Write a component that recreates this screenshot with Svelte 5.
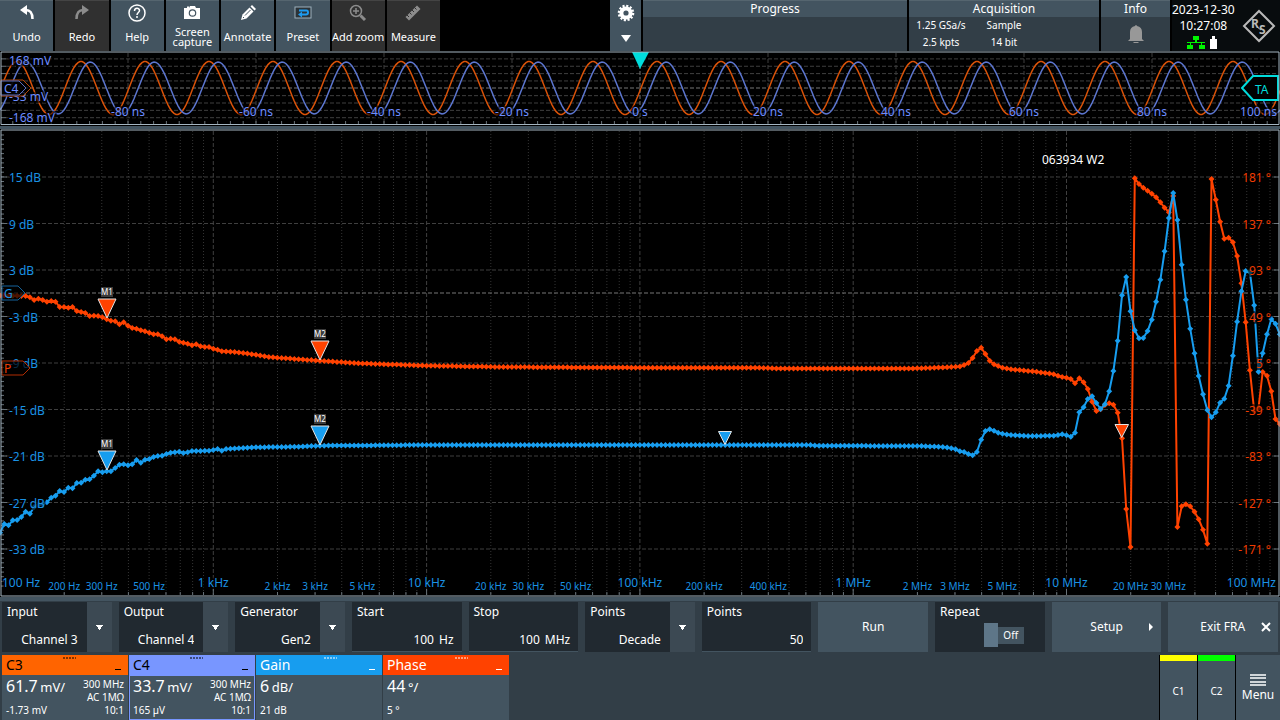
<script>
	const tools = [
		{ icon: 'undo', label: 'Undo' },
		{ icon: 'redo', label: 'Redo', off: true },
		{ icon: 'help', label: 'Help' },
		{ icon: 'camera', label: 'Screen capture' },
		{ icon: 'pencil', label: 'Annotate' },
		{ icon: 'preset', label: 'Preset' },
		{ icon: 'zoom', label: 'Add zoom', off: true },
		{ icon: 'ruler', label: 'Measure', off: true }
	];

	const channels = [
		{ name: 'C3', kind: 'c3', scale: '61.7', unit: 'mV/', offset: '-1.73 mV', bandwidth: '300 MHz', coupling: 'AC 1MΩ', probe: '10:1' },
		{ name: 'C4', kind: 'c4', scale: '33.7', unit: 'mV/', offset: '165 µV', bandwidth: '300 MHz', coupling: 'AC 1MΩ', probe: '10:1' },
		{ name: 'Gain', kind: 'gain', scale: '6', unit: 'dB/', offset: '21 dB' },
		{ name: 'Phase', kind: 'phase', scale: '44', unit: '°/', offset: '5 °' }
	];

	// time domain preview
	function sine(peak, amp) {
		let pts = [];
		for (let x = 0; x <= 1280; x += 2) {
			pts.push(x + ',' + (88 - amp * Math.cos(((x - peak) / 64) * 2 * Math.PI)).toFixed(1));
		}
		return pts.join(' ');
	}
	const times = [-80, -60, -40, -20, 0, 20, 40, 60, 80];
	const timeTicks = Array.from({ length: 99 }, (_, i) => (i + 1) * 12.8);
	const previewLines = [-4, -3, -2, -1, 1, 2, 3, 4].map((n) => 88.3 + n * 7.35);

	// bode plot, 50 points per decade over 6 decades
	const decade = 213.3;
	const step = decade / 50;
	const minor = [];
	for (let d = 0; d < 6; d++) {
		for (let m = 2; m < 10; m++) minor.push((d + Math.log10(m)) * decade);
	}
	const rows = Array.from({ length: 9 }, (_, i) => ({
		y: 177 + i * 46.5,
		db: 15 - i * 6 + ' dB',
		deg: 181 - i * 44 + ' °'
	}));
	const sideTicks = Array.from({ length: 98 }, (_, i) => 135 + i * 4.65);

	const freqs = [
		['1 kHz', 1], ['10 kHz', 2], ['100 kHz', 3], ['1 MHz', 4], ['10 MHz', 5]
	];
	const smallFreqs = [
		['200 Hz', 0.301], ['300 Hz', 0.477], ['500 Hz', 0.699],
		['2 kHz', 1.301], ['3 kHz', 1.477], ['5 kHz', 1.699],
		['20 kHz', 2.301], ['30 kHz', 2.477], ['50 kHz', 2.699],
		['200 kHz', 3.301], ['400 kHz', 3.602],
		['2 MHz', 4.301], ['3 MHz', 4.477], ['5 MHz', 4.699],
		['20 MHz', 5.301], ['30 MHz', 5.477]
	];

	// [first index, values...] for runs of measured points, gaps are interpolated
	const phaseRuns = [
		[0, 295.5], [6, 296, 297.3, 300, 298.7, 300, 301.7, 301, 301.7, 307, 307, 307.7, 307, 311, 312, 313, 316, 315.7, 316, 317.3, 319.3,
			320.7, 321.3, 324.3, 322.3, 325.7, 328, 328.7, 330.3, 331.3, 332.7, 334.3, 334.3, 336.3, 339.3, 338.7, 339.3, 341.7, 342.7,
			343.7, 345.3, 344.3, 346.3, 347, 347, 348.7, 349.7, 351.3],
		[55, 352], [60, 354.7], [63, 357], [70, 359.3], [75, 360.7], [84, 363.3], [100, 365.7], [118, 367], [150, 367.7], [178, 367.7],
		[182, 368.5], [213, 368.5], [218, 368], [223, 367], [225, 366.5, 365, 363, 358, 351, 347.7, 354, 360.7, 364.3, 366, 367.7],
		[237, 369.3], [243, 371.7], [247, 374.3, 375.7, 377, 377.7, 379, 383.3, 378.3, 382.3, 389, 401.7, 411, 409.3, 405, 403.3, 404.7,
			412.7, 438.3, 509, 547, 178.3, 184, 187.7, 190.7, 193.7, 197.3, 202.3, 207.7, 212.3, 196, 527, 506.3, 504.3, 506.3, 511.7,
			519.3, 529.7, 543.7, 179, 199.7, 221.7, 238.7, 237.7, 242.3, 256, 283.3, 322.3, 370.3, 411, 408, 372, 375.7, 391.3, 419, 424]
	];
	const gainRuns = [
		[0, 532.7, 524, 525.3, 520.3, 520, 517, 511.7, 513.7, 507, 505, 504, 502.3, 497.7, 495.7, 491, 492, 487.7, 488.3, 483, 482.7,
			479.7, 479.3, 475.7, 471.3, 472.3, 471.3, 471.3, 468, 464.7, 464.3, 465.3, 464.3, 460, 462.7, 459.7, 459, 457, 456, 455.7,
			454, 452.7, 452.3, 451.7, 453, 452.3, 451],
		[49, 450.7], [51, 449, 450.7, 449], [60, 447.3], [70, 446.7], [75, 445.7], [100, 445], [190, 445], [192, 445.7], [216, 446],
		[221, 447], [223, 448.3, 449.3, 451.3, 452, 454, 455.3, 452, 439.7, 431, 429.3, 430.7, 432.7, 433.7], [237, 435], [241, 436],
		[247, 435.7, 435, 434.3, 435.3, 436.7, 432.7, 412.3, 407.3, 399, 396.3, 403, 409, 404.3, 391.3, 371, 340.7, 295.3, 277, 311.3,
			330.3, 338.3, 338, 331, 319.7, 301.7, 279.7, 251.3, 218, 193, 220, 264.7, 299.7, 328.7, 353.3, 376, 394.3, 410, 417.3,
			412.3, 402.7, 398.7, 385.7, 355.7, 321.7, 291.3, 271, 272.3, 305.3, 371.7, 353.3, 334.3, 319, 323.7, 334.3]
	];

	function expand(runs) {
		let out = [];
		for (const [start, ...values] of runs) {
			const from = out.length - 1;
			for (let i = from + 1; i < start; i++) {
				out.push(out[from] + ((values[0] - out[from]) * (i - from)) / (start - from));
			}
			out.push(...values);
		}
		return out.map((y, i) => [i * step, y]);
	}
	const traces = [
		{ kind: 'phase', points: expand(phaseRuns) },
		{ kind: 'gain', points: expand(gainRuns) }
	];
	const line = (points) => points.map(([x, y]) => x.toFixed(1) + ',' + y.toFixed(1)).join(' ');
	const dots = (points) => points.map(([x, y]) => `M${x.toFixed(1)} ${(y - 3).toFixed(1)}l3 3l-3 3l-3 -3z`).join('');

	const markers = [
		{ kind: 'phase', label: 'M1', x: 107, y: 318 },
		{ kind: 'phase', label: 'M2', x: 320, y: 360 },
		{ kind: 'gain', label: 'M1', x: 107, y: 470 },
		{ kind: 'gain', label: 'M2', x: 320, y: 445 }
	];

	let input = $state('Channel 3');
	let output = $state('Channel 4');
	let generator = $state('Gen2');
	let mode = $state('Decade');
	let start = $state('100');
	let stop = $state('100');
	let points = $state('50');
	let repeat = $state(false);
</script>

{#snippet icon(name)}
	<svg class="icon" viewBox="0 0 20 20" width="20" height="20" aria-hidden="true">
		{#if name === 'undo'}
			<path class="fill" d="M3 7L10 2V12Z" />
			<path class="stroke thick" d="M8 7C13 6.500 15.500 10 15.500 16" />
		{:else if name === 'redo'}
			<path class="fill" d="M17 7L10 2V12Z" />
			<path class="stroke thick" d="M12 7C7 6.500 4.500 10 4.500 16" />
		{:else if name === 'help'}
			<circle class="stroke" cx="10" cy="10" r="8" />
			<path class="stroke" d="M7.500 8C7.500 4.500 12.500 4.500 12.500 7.500C12.500 9.500 10 9.500 10 12" />
			<circle class="fill" cx="10" cy="14" r="1" />
		{:else if name === 'camera'}
			<path class="fill" d="M2 5H5V3.500H7V5L8 3H13L14 5H18V16H2Z" />
			<circle class="hole" cx="10.500" cy="10" r="3.800" />
			<circle class="fill" cx="10.500" cy="10" r="2.600" />
		{:else if name === 'pencil'}
			<path class="fill" d="M3 17L4.500 11.500L11.500 4.500L15.500 8.500L8.500 15.500Z" />
			<path class="fill" d="M12.500 3.500L14 2L18 6L16.500 7.500Z" />
			<path class="cut slate" d="M7 12.500L12.500 7M5 14L6 15" />
		{:else if name === 'preset'}
			<rect class="screen" x="2" y="4" width="16" height="11" />
			<path class="blue" d="M6 7.500H13.500Q15 7.500 15 9.500T13 11.500H8" />
			<path class="bluefill" d="M5 11.500L9 8.500V14.500Z" />
		{:else if name === 'zoom'}
			<circle class="stroke" cx="8" cy="8" r="5.500" />
			<path class="stroke" d="M5 8H11M8 5V11" />
			<path class="stroke wide" d="M12.500 12.500L17 17" />
		{:else if name === 'ruler'}
			<path class="fill" d="M2.500 14L14 2.500L17.500 6L6 17.500Z" />
			<path class="cut" d="M4 12L6 14M6.500 9.500L8.500 11.500M9 7L11 9M11.500 4.500L13.500 6.500" />
		{/if}
	</svg>
{/snippet}

<div class="scope">
	<header>
		<nav class="tools">
			{#each tools as tool}
				<button class="tool" class:off={tool.off}>
					{@render icon(tool.icon)}
					<span class="caption">{tool.label}</span>
				</button>
			{/each}
		</nav>
		<button class="settings" aria-label="Toolbar settings">
			<svg viewBox="0 0 20 44" width="20" height="44">
				<circle class="teeth" cx="10" cy="9" r="6.800" />
				<circle class="gear" cx="10" cy="9" r="4.600" />
				<path class="fill" d="M5 31H15L10 38Z" />
			</svg>
		</button>
		<section class="status progress"><h2>Progress</h2></section>
		<section class="status acquisition">
			<h2>Acquisition</h2>
			<div class="facts">
				<span>1.25 GSa/s</span><span>Sample</span>
				<span>2.5 kpts</span><span>14 bit</span>
			</div>
		</section>
		<section class="status info">
			<h2>Info</h2>
			<svg class="bell" viewBox="0 0 18 20" width="18" height="20" aria-hidden="true">
				<path d="M8 2Q9 0 10 2Q15 3 15 8V15L17 17H1L3 15V8Q3 3 8 2ZM6 18H12L11 19H7Z" />
			</svg>
		</section>
		<div class="clock">
			<div class="datetime">
				<span>2023-12-30</span>
				<span>10:27:08</span>
				<svg viewBox="0 0 34 14" width="34" height="14" aria-hidden="true">
					<path class="lan" d="M7 0H13V4H11V6H19V7H16V9H19V13H13V9H15V7H5V9H7V13H1V9H4V7H1V6H9V4H7Z" />
					<path class="fill" d="M26 0H29V3H31V13H24V3H26Z" />
				</svg>
			</div>
			<svg class="logo" viewBox="0 0 34 34" width="34" height="34" aria-hidden="true">
				<path d="M17 2L32 17L17 32L2 17Z" />
				<text x="9" y="19">R</text>
				<text x="17" y="25">S</text>
				<path class="thin" d="M15 18L19 21" />
			</svg>
		</div>
	</header>

	<svg class="preview" viewBox="0 51 1280 75">
		{#each previewLines as y}
			<line class="grid" x1="6" x2="1276" y1={y} y2={y} />
		{/each}
		<line class="axis" x1="6" x2="1276" y1="88" y2="88" />
		{#each times as t}
			<line class={t === 0 ? 'axis' : 'grid'} x1={640 + t * 6.4} x2={640 + t * 6.4} y1="53" y2="124" />
		{/each}
		{#each timeTicks as x}
			<line class="tick" x1={x} x2={x} y1="121" y2="124" />
		{/each}
		{#each previewLines as y}
			<line class="tick" x1="1" x2="6" y1={y} y2={y} />
		{/each}
		<polyline class="wave c3" points={sine(81, 26.5)} />
		<polyline class="wave c4" points={sine(90.3, 26)} />
		<g class="volts">
			<text x="9" y="65">168 mV</text>
			<text x="9" y="101">-33 mV</text>
			<text x="9" y="122">-168 mV</text>
			{#each times as t}
				<text class="mid" x={640 + t * 6.4} y="116">{t === 0 ? '0 s' : t + ' ns'}</text>
			{/each}
			<text class="end" x="1277" y="116">100 ns</text>
		</g>
		<path class="tag c3" d="M1 80H23L31 88L23 96H1Z" />
		<path class="tag c4" d="M1 81H19L26 88L19 95H1Z" />
		<text class="tagname c4" x="4" y="93">C4</text>
		<path class="trigger" d="M632 52H649L640 69Z" />
		<path class="level" d="M1242 88L1253 76H1278V100H1253Z" />
		<text class="leveltext" x="1255" y="94">TA</text>
		<path class="frame" d="M1 52H1279V124.500H1Z" />
	</svg>

	<div class="splitter"></div>

	<svg class="bode" viewBox="0 129 1280 468">
		{#each minor as x}
			<line class="dotted" x1={x} x2={x} y1="131" y2="595" />
			<line class="tick" x1={x} x2={x} y1="592" y2="595" />
		{/each}
		{#each freqs as [, d]}
			<line class="grid" x1={d * decade} x2={d * decade} y1="131" y2="595" />
			<line class="tick" x1={d * decade} x2={d * decade} y1="589" y2="595" />
		{/each}
		{#each rows as row}
			<line class="grid" x1="6" x2="1276" y1={row.y} y2={row.y} />
			<line class="tick" x1="1" x2="7" y1={row.y} y2={row.y} />
			<line class="tick" x1="1274" x2="1279" y1={row.y} y2={row.y} />
		{/each}
		{#each sideTicks as y}
			<line class="tick" x1="1" x2="4" y1={y} y2={y} />
		{/each}
		<line class="axis" x1="2" x2="1278" y1="293" y2="293" />

		{#each traces as trace}
			<polyline class="trace {trace.kind}" points={line(trace.points)} />
			<path class="dots {trace.kind}" d={dots(trace.points)} />
		{/each}

		{#each rows as row}
			<text class="gain" x="9" y={row.y + 5}>{row.db}</text>
			<text class="phase end" x="1271" y={row.y + 5}>{row.deg}</text>
		{/each}
		<text class="gain" x="2" y="587">100 Hz</text>
		{#each freqs as [label, d]}
			<text class="gain mid" x={d * decade} y="587">{label}</text>
		{/each}
		<text class="gain end" x="1276" y="587">100 MHz</text>
		{#each smallFreqs as [label, d]}
			<text class="gain mid small" x={d * decade} y="590">{label}</text>
		{/each}

		<path class="tag gain" d="M2 286H18L25 293L18 300H2Z" />
		<text class="tagname gain" x="4" y="298">G</text>
		<path class="tag phase" d="M2 361H23L30 368L23 375H2Z" />
		<text class="tagname phase" x="4" y="373">P</text>

		{#each markers as m}
			<rect class="plate" x={m.x - 6} y={m.y - 31} width="12" height="10" />
			<text class="platetext mid" x={m.x} y={m.y - 23}>{m.label}</text>
			<path class="marker {m.kind}" d="M{m.x - 9} {m.y - 19}h18l-9 19z" />
		{/each}
		<path class="marker gain" d="M718.500 431.500h13l-6.500 13z" />
		<path class="marker phase" d="M1115 424.500h13.500l-6.800 13z" />
		<text class="title" x="1042" y="164">063934 W2</text>
		<path class="frame" d="M1 130H1279V596H1Z" />
	</svg>

	<form class="controls" onsubmit={(e) => e.preventDefault()}>
		<div class="field pick">
			<label for="input">Input</label>
			<select id="input" bind:value={input}><option>Channel 3</option><option>Channel 4</option></select>
		</div>
		<div class="field pick">
			<label for="output">Output</label>
			<select id="output" bind:value={output}><option>Channel 3</option><option>Channel 4</option></select>
		</div>
		<div class="field pick">
			<label for="generator">Generator</label>
			<select id="generator" bind:value={generator}><option>Gen1</option><option>Gen2</option></select>
		</div>
		<div class="field">
			<label for="start">Start</label>
			<div class="entry"><input id="start" type="text" bind:value={start} /><span>Hz</span></div>
		</div>
		<div class="field">
			<label for="stop">Stop</label>
			<div class="entry"><input id="stop" type="text" bind:value={stop} /><span>MHz</span></div>
		</div>
		<div class="field pick">
			<label for="mode">Points</label>
			<select id="mode" bind:value={mode}><option>Decade</option><option>Total</option></select>
		</div>
		<div class="field">
			<label for="points">Points</label>
			<div class="entry"><input id="points" type="text" bind:value={points} /></div>
		</div>
		<button class="action">Run</button>
		<div class="field">
			<label for="repeat">Repeat</label>
			<div class="switch">
				<input id="repeat" type="checkbox" bind:checked={repeat} />
				<span>{repeat ? 'On' : 'Off'}</span>
			</div>
		</div>
		<button class="action">
			Setup
			<svg viewBox="0 0 8 10" width="8" height="10" aria-hidden="true"><path class="fill" d="M2 1L6 5L2 9Z" /></svg>
		</button>
		<button class="action exit">
			Exit FRA
			<svg viewBox="0 0 10 10" width="10" height="10" aria-hidden="true"><path class="cross" d="M1 1L9 9M9 1L1 9" /></svg>
		</button>
	</form>

	<footer>
		{#each channels as ch}
			<section class="channel {ch.kind}">
				<h3>
					{ch.name}
					<svg viewBox="0 0 14 2" width="14" height="2" aria-hidden="true"><path d="M1 1H14" /></svg>
					<i></i>
				</h3>
				<div class="values">
					<div class="left">
						<div><b>{ch.scale}</b> <span class="unit">{ch.unit}</span></div>
						<span>{ch.offset}</span>
					</div>
					{#if ch.bandwidth}
						<div class="right">
							<span>{ch.bandwidth}</span>
							<span>{ch.coupling}</span>
							<span>{ch.probe}</span>
						</div>
					{/if}
				</div>
			</section>
		{/each}
		<div class="rest">
			<button class="source yellow">C1</button>
			<button class="source green">C2</button>
			<button class="menu">
				<svg viewBox="0 0 16 12" width="16" height="12" aria-hidden="true"><path d="M0 1H16M0 4H16M0 8H16M0 11H16" /></svg>
				Menu
			</button>
		</div>
	</footer>
</div>

<style>
	:global(body) {
		background: #323e47;
	}

	.scope {
		display: flex;
		flex-direction: column;
		min-height: 100vh;
		font-family: "Noto Sans", "Open Sans", sans-serif;
		font-size: 12px;
		line-height: 14px;
		color: #fff;
	}

	button, input, select {
		font: inherit;
		color: inherit;
		border: 0;
		border-radius: 0;
		padding: 0;
		margin: 0;
	}

	h2, h3 {
		margin: 0;
		font-size: 12px;
		font-weight: 400;
	}

	svg {
		flex: none;
	}

	.fill {
		fill: currentColor;
	}

	/* top bar */
	header {
		display: grid;
		grid-template-columns: 608fr 31fr 264fr 190fr 69fr 108fr;
		column-gap: 2px;
		height: 51px;
		background: #000;
	}

	.tools {
		display: grid;
		grid-template-columns: repeat(8, 1fr);
		column-gap: 2px;
		margin-right: 168px;
	}

	.tool {
		display: flex;
		flex-direction: column;
		align-items: center;
		background: #435460;
		border-top: 1px solid #55656f;
		font-size: 11px;
		line-height: 10px;
		padding-top: 2px;
		white-space: nowrap;
	}

	.tool:nth-child(4) {
		white-space: normal;
	}

	.tool.off {
		background: #303030;
		border-color: #444;
	}

	.tool.off .icon {
		color: #8c8c8c;
	}

	.caption {
		display: flex;
		align-items: center;
		justify-content: center;
		flex: 1;
		text-align: center;
	}

	.stroke {
		fill: none;
		stroke: currentColor;
		stroke-width: 1.5;
	}

	.thick {
		stroke-width: 2.5;
	}

	.wide {
		stroke-width: 3;
	}

	.hole {
		fill: #435460;
	}

	.cut {
		fill: none;
		stroke: #303030;
	}

	.cut.slate {
		stroke: #435460;
	}

	.screen {
		fill: #2b3338;
		stroke: #9db0bc;
	}

	.blue {
		fill: none;
		stroke: #1d9bf0;
		stroke-width: 2;
	}

	.bluefill {
		fill: #1d9bf0;
	}

	.settings {
		display: flex;
		justify-content: center;
		background: #435460;
		padding-top: 4px;
	}

	.gear {
		fill: none;
		stroke: #fff;
		stroke-width: 4;
	}

	.teeth {
		fill: none;
		stroke: #fff;
		stroke-width: 3;
		stroke-dasharray: 2 1.560;
	}

	.status {
		background: #323e47;
		text-align: center;
	}

	.status h2 {
		background: #435460;
		border-top: 1px solid #55656f;
		line-height: 16px;
	}

	.facts {
		display: grid;
		grid-template-columns: 64px 62px;
		font-size: 10px;
		line-height: 17px;
	}

	.facts span {
		white-space: nowrap;
	}

	.bell {
		margin-top: 7px;
		fill: #989898;
	}

	.clock {
		display: flex;
		align-items: center;
		justify-content: space-between;
		background: #080c0e;
	}

	.datetime {
		display: flex;
		flex-direction: column;
		align-items: center;
		line-height: 16px;
	}

	.datetime svg {
		margin-top: 2px;
	}

	.lan {
		fill: #00f500;
	}

	.logo {
		fill: none;
		stroke: #b9b9b9;
		stroke-width: 2;
		margin-right: 4px;
	}

	.logo .thin {
		stroke-width: 1;
	}

	/* charts */
	.preview, .bode {
		display: block;
		width: 100%;
		height: auto;
		background: #000;
	}

	.splitter {
		height: 3px;
		background: #435460;
	}

	.frame {
		fill: none;
		stroke: #a5b6c2;
	}

	.grid {
		stroke: #3f3f3f;
		stroke-dasharray: 4 2;
	}

	.dotted {
		stroke: #343434;
		stroke-dasharray: 1 2;
	}

	.axis {
		stroke: #777;
		stroke-dasharray: 4 2;
	}

	.tick {
		stroke: #687279;
	}

	.wave {
		fill: none;
		stroke-width: 1.5;
	}

	.wave.c3 {
		stroke: #d95208;
	}

	.wave.c4 {
		stroke: #5c76d0;
	}

	text {
		font-size: 12px;
		stroke: #000;
		stroke-opacity: 0.6;
		stroke-width: 4;
		stroke-linejoin: round;
		paint-order: stroke;
	}

	.logo text {
		fill: #b9b9b9;
		stroke: none;
		font-weight: 700;
	}

	.volts {
		fill: #6c8cff;
	}

	.mid {
		text-anchor: middle;
	}

	.end {
		text-anchor: end;
	}

	text.small {
		font-size: 10px;
	}

	text.gain {
		fill: #1a92e4;
	}

	text.phase {
		fill: #f03c00;
	}

	.tag {
		fill: #000;
		fill-opacity: 0.7;
	}

	.tag.c3 {
		stroke: #b34708;
	}

	.tag.c4 {
		stroke: #5a6fbf;
	}

	.tag.gain {
		stroke: #14639b;
	}

	.tag.phase {
		stroke: #b22d02;
	}

	.tagname, .leveltext, .title, .platetext {
		stroke: none;
	}

	.tagname.c4 {
		fill: #6c8cff;
	}

	.trigger {
		fill: #00dcdc;
	}

	.level {
		fill: #000;
		stroke: #00dcdc;
		stroke-width: 2;
	}

	.leveltext {
		fill: #00dcdc;
	}

	.trace {
		fill: none;
		stroke-width: 2;
	}

	.trace.phase {
		stroke: #ff4200;
	}

	.trace.gain {
		stroke: #179def;
	}

	.dots.phase {
		fill: #ff4200;
	}

	.dots.gain {
		fill: #179def;
	}

	.marker {
		stroke: #e4e4e4;
	}

	.marker.phase {
		fill: #ff4200;
	}

	.marker.gain {
		fill: #179def;
	}

	.plate {
		fill: #3a3a3a;
	}

	text.platetext {
		fill: #fff;
		font-size: 8px;
	}

	.title {
		fill: #fff;
	}

	/* parameter row */
	.controls {
		display: grid;
		grid-template-columns: repeat(11, minmax(0, 1fr));
		column-gap: 7px;
		height: 50px;
		padding: 1px 2px 3px 2px;
		border-top: 4px solid #435460;
	}

	.field {
		position: relative;
		display: flex;
		flex-direction: column;
		justify-content: space-between;
		background: #212930;
	}

	.field label {
		padding: 3px 5px;
	}

	.pick label {
		position: absolute;
		pointer-events: none;
	}

	.pick select {
		appearance: none;
		flex: 1;
		padding: 25px 34px 0 5px;
		text-align: right;
		text-align-last: right;
		background:
			conic-gradient(from -36deg at 50% 100%, #fff 72deg, transparent 0) right 9px center / 7px 5px no-repeat,
			linear-gradient(#3c4953, #3c4953) right / 25px 100% no-repeat;
	}

	.entry {
		display: flex;
		gap: 5px;
		padding: 0 8px 4px 5px;
		border-bottom: 1px solid #435460;
	}

	.entry input {
		flex: 1;
		min-width: 0;
		background: none;
		text-align: right;
	}

	.switch {
		display: flex;
		align-items: center;
		justify-content: flex-end;
		padding: 0 21px 5px 0;
	}

	.switch input {
		appearance: none;
		width: 14px;
		height: 24px;
		background: #5e7688;
	}

	.switch span {
		width: 26px;
		background: #435460;
		font-size: 10px;
		line-height: 17px;
		text-align: center;
	}

	.action {
		display: flex;
		align-items: center;
		justify-content: center;
		background: #435460;
	}

	.action svg {
		margin: 0 -32px 0 24px;
	}

	.action.exit svg {
		margin: 0 -25px 0 16px;
	}

	.cross {
		fill: none;
		stroke: #fff;
		stroke-width: 2;
	}

	/* bottom bar */
	footer {
		display: flex;
		flex: 1;
		gap: 1px;
		padding-left: 2px;
	}

	.channel {
		display: flex;
		flex-direction: column;
		width: 126px;
		background: #435460;
	}

	.channel h3 {
		display: flex;
		justify-content: space-between;
		font-size: 14px;
		line-height: 20px;
		padding: 0 7px 0 4px;
	}

	.channel h3 svg {
		margin-top: 2px;
		stroke: currentColor;
		stroke-dasharray: 2 1;
	}

	.channel h3 i {
		width: 6px;
		height: 14px;
		border-bottom: 1px solid;
	}

	.channel.c3 h3 {
		background: #ff6400;
		color: #000;
	}

	.channel.c4 h3 {
		background: #7896ff;
		color: #000;
	}

	.channel.gain h3 {
		background: #179def;
	}

	.channel.phase h3 {
		background: #ff4200;
	}

	.channel.c4 .values {
		box-shadow: inset 0 0 0 1px #7896ff;
	}

	.values {
		display: flex;
		flex: 1;
		justify-content: space-between;
		padding: 2px 4px 3px 4px;
		font-size: 10px;
		line-height: 13px;
		white-space: nowrap;
	}

	.left, .right {
		display: flex;
		flex-direction: column;
		justify-content: space-between;
	}

	.left div {
		line-height: 18px;
	}

	.left b {
		font-size: 16px;
		font-weight: 400;
	}

	.unit {
		font-size: 13px;
	}

	.right {
		justify-content: flex-end;
		text-align: right;
	}

	.rest {
		display: flex;
		gap: 1px;
		margin-left: auto;
		padding-left: 1px;
		background: #000;
	}

	.source {
		width: 37px;
		background: #435460;
		border-top: 6px solid;
		font-size: 10px;
	}

	.source.yellow {
		border-color: #ff0;
	}

	.source.green {
		border-color: #0f0;
	}

	.menu {
		display: flex;
		flex-direction: column;
		align-items: center;
		justify-content: center;
		gap: 2px;
		width: 44px;
		background: #435460;
	}

	.menu svg path {
		stroke: #fff;
		stroke-width: 1.5;
	}
</style>
